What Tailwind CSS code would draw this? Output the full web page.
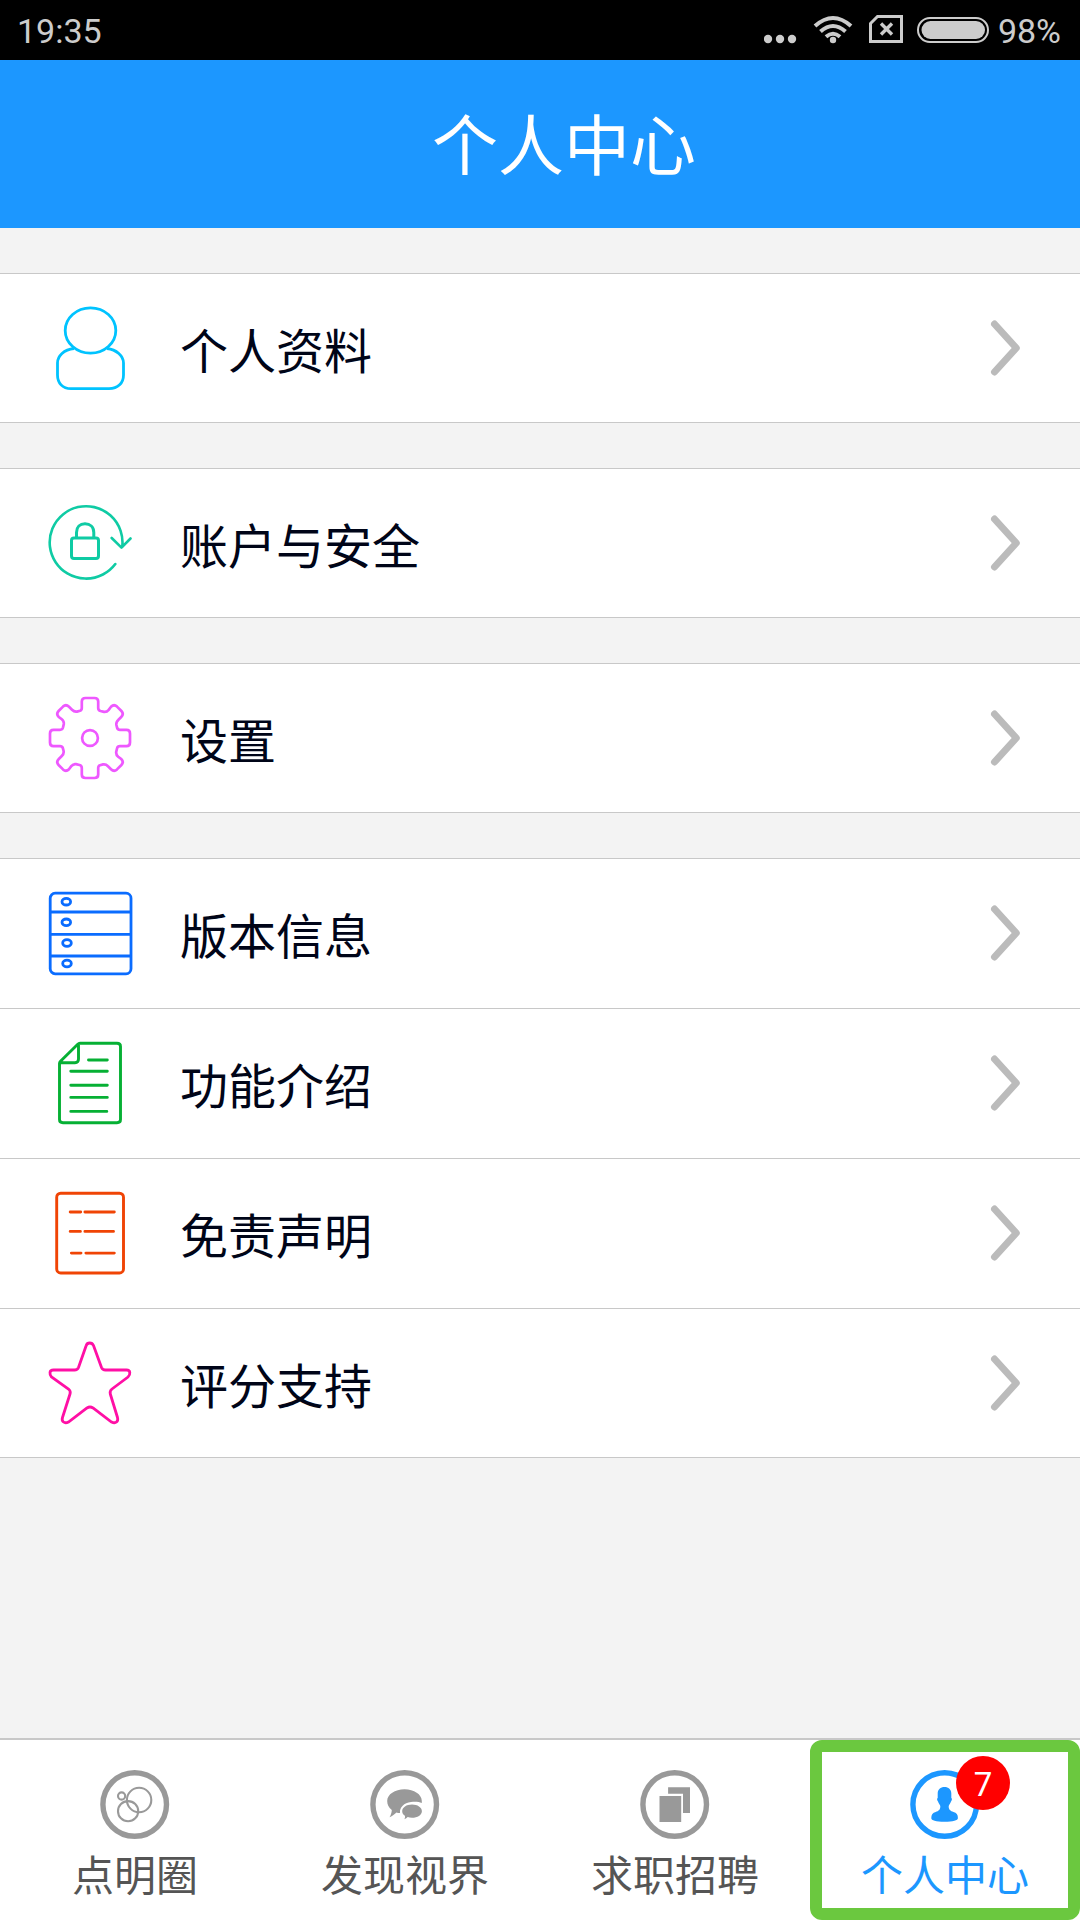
<!DOCTYPE html>
<html lang="zh-CN">

<head>
    <meta charset="UTF-8">
    <meta name="viewport" content="width=device-width, initial-scale=1.0">
    <title>个人中心</title>
    <script src="https://cdn.jsdelivr.net/npm/@tailwindcss/browser@4"></script>
</head>

<body class="flex flex-col w-[1080px] h-[1920px] overflow-hidden bg-[#f3f3f3] font-['Noto_Sans_CJK_SC',sans-serif]">
    <!-- #region Status bar -->
    <div class="flex items-center justify-between h-[60px] shrink-0 bg-black pl-[17px] pr-[19px] text-[#ccc] font-[Roboto,sans-serif] text-[34px] leading-[60px]">
        <span class="pt-px">19:35</span>
        <div class="flex items-center">
            <svg width="225" height="60" viewBox="764 0 225 60" fill="none" stroke="#ccc" stroke-width="3">
                <g fill="#ccc" stroke="none">
                    <circle cx="768" cy="39" r="4.2"></circle>
                    <circle cx="780" cy="39" r="4.2"></circle>
                    <circle cx="792" cy="39" r="4.2"></circle>
                    <circle cx="833" cy="40" r="3.2"></circle>
                </g>
                <path stroke-width="4" d="M815 26Q833 10 851 26M820.500 31.500Q833 20.500 845.500 31.500M826 36.800Q833 30.700 840 36.800"></path>
                <path d="M870.500 23.500L877.500 16.500H901.500V41.500H870.500Z"></path>
                <path stroke-width="3.4" d="M881 23.500L892 34.500M892 23.500L881 34.500"></path>
                <rect x="918" y="18" width="70" height="24" rx="12" stroke-width="2"></rect>
                <rect x="921.500" y="21" width="63.500" height="18" rx="9" fill="#ccc" stroke="none"></rect>
            </svg>
            <span class="pl-[9px] pt-px">98%</span>
        </div>
    </div>
    <!-- #endregion Status bar -->

    <!-- #region Header -->
    <header class="flex items-center justify-center h-[168px] shrink-0 bg-[#1c97ff] pl-12 pb-1.5 text-white">
        <h1 class="text-[66px] leading-[96px]">个人中心</h1>
    </header>
    <!-- #endregion Header -->

    <!-- #region Menu -->
    <main class="flex flex-col gap-[45px] pt-[45px] flex-1 text-[48px] leading-[72px] text-[#000518]">
        <section class="bg-white border-y border-[#c8c8c8]">
            <a class="flex items-center h-[148px] pl-12 pr-[60px]">
                <svg class="overflow-visible" width="84" height="84" viewBox="0 0 84 84" fill="none" stroke="#00c3ff" stroke-width="2.800">
                    <ellipse cx="42.500" cy="24.500" rx="25.300" ry="22.700"></ellipse>
                    <path d="M26 42.500C16 43.500 9.500 50 9.500 57V69C9.500 77 14.500 82.700 23 82.700H61C70 82.700 75.500 77 75.500 69V57C75.500 50 68.500 43.500 59 42.500"></path>
                </svg>
                <span class="pl-12 flex-1">个人资料</span>
                <svg width="30" height="56" viewBox="0 0 30 56" fill="none" stroke="#bbb" stroke-width="7" stroke-linecap="round" stroke-linejoin="round"><path d="M4.500 4L26.300 28L4.500 52"></path></svg>
            </a>
        </section>

        <section class="bg-white border-y border-[#c8c8c8]">
            <a class="flex items-center h-[148px] pl-12 pr-[60px]">
                <svg class="overflow-visible" width="84" height="84" viewBox="0 0 84 84" fill="none" stroke="#0fcba4" stroke-width="2.600" stroke-linecap="round" stroke-linejoin="round">
                    <path d="M67.300 63A36.400 36.200 0 1 1 74.200 46M63.700 37L73.500 46.700L82.500 37.500"></path>
                    <g stroke-width="3">
                        <rect x="23.500" y="37" width="27" height="20.500" rx="2.500"></rect>
                        <path d="M28.500 36V31.500C28.500 26 32 22.700 37 22.700S45.800 26 45.800 31.500V36"></path>
                    </g>
                </svg>
                <span class="pl-12 flex-1">账户与安全</span>
                <svg width="30" height="56" viewBox="0 0 30 56" fill="none" stroke="#bbb" stroke-width="7" stroke-linecap="round" stroke-linejoin="round"><path d="M4.500 4L26.300 28L4.500 52"></path></svg>
            </a>
        </section>

        <section class="bg-white border-y border-[#c8c8c8]">
            <a class="flex items-center h-[148px] pl-12 pr-[60px]">
                <svg class="overflow-visible" width="84" height="84" viewBox="-42 -42 84 84" fill="none" stroke="#ee58ff" stroke-width="2.700">
                    <path id="gear-quarter" d="M0 -40H4.500Q8.200 -40 8.200 -36.500V-30Q8.200 -27.600 10.500 -27L14 -26.200Q16.800 -25.900 18.700 -28.200L21 -31.200Q24 -34.200 27 -31.400L31.400 -27Q34.200 -24 31.200 -21L28.200 -18Q25.900 -15.800 26.400 -13L27.200 -10Q27.800 -8.200 30 -8.200H36.500Q40 -8.200 40 -4.500V0"></path>
                    <use href="#gear-quarter" transform="rotate(90)"></use>
                    <use href="#gear-quarter" transform="rotate(180)"></use>
                    <use href="#gear-quarter" transform="rotate(270)"></use>
                    <circle cx="0" cy="0" r="7.900"></circle>
                </svg>
                <span class="pl-12 flex-1">设置</span>
                <svg width="30" height="56" viewBox="0 0 30 56" fill="none" stroke="#bbb" stroke-width="7" stroke-linecap="round" stroke-linejoin="round"><path d="M4.500 4L26.300 28L4.500 52"></path></svg>
            </a>
        </section>

        <section class="bg-white border-y border-[#c8c8c8] divide-y divide-[#c8c8c8]">
            <a class="flex items-center h-[150px] pl-12 pr-[60px] pb-px">
                <svg class="overflow-visible" width="84" height="84" viewBox="0 0 84 84" fill="none" stroke="#0a6cff" stroke-width="2.800">
                    <rect x="2.200" y="2.200" width="80.800" height="80.600" rx="5"></rect>
                    <path d="M2 21H83M2 43.300H83M2 65H83"></path>
                    <ellipse cx="18.300" cy="10.700" rx="4.300" ry="3.300"></ellipse>
                    <ellipse cx="18.300" cy="31.300" rx="4.300" ry="3.300"></ellipse>
                    <ellipse cx="19" cy="52" rx="4.300" ry="3.300"></ellipse>
                    <ellipse cx="19" cy="72.500" rx="4.300" ry="3.300"></ellipse>
                </svg>
                <span class="pl-12 flex-1">版本信息</span>
                <svg width="30" height="56" viewBox="0 0 30 56" fill="none" stroke="#bbb" stroke-width="7" stroke-linecap="round" stroke-linejoin="round"><path d="M4.500 4L26.300 28L4.500 52"></path></svg>
            </a>
            <a class="flex items-center h-[150px] pl-12 pr-[60px] pb-px">
                <svg class="overflow-visible" width="84" height="84" viewBox="0 0 84 84" fill="none" stroke="#06b034" stroke-width="2.900" stroke-linecap="round" stroke-linejoin="round">
                    <path d="M11.500 22.500Q11.500 21.300 12.500 20.300L29.500 3.500Q30.700 2.300 32 2.300H69Q72.500 2.300 72.500 5.500V78.500Q72.500 81.700 69 81.700H15Q11.500 81.700 11.500 78.500ZM30.500 3V18Q30.500 21.700 27 21.700H12"></path>
                    <path d="M42 19H60.800M24.300 30.300H60.800M24.300 44.300H60.800M24.300 56.400H60.800M24.300 70.400H60.300" transform="translate(-1.500 0)"></path>
                </svg>
                <span class="pl-12 flex-1">功能介绍</span>
                <svg width="30" height="56" viewBox="0 0 30 56" fill="none" stroke="#bbb" stroke-width="7" stroke-linecap="round" stroke-linejoin="round"><path d="M4.500 4L26.300 28L4.500 52"></path></svg>
            </a>
            <a class="flex items-center h-[150px] pl-12 pr-[60px] pb-px">
                <svg class="overflow-visible" width="84" height="84" viewBox="0 0 84 84" fill="none" stroke="#f04405" stroke-width="2.900" stroke-linecap="round">
                    <rect x="8.700" y="2.200" width="66.800" height="79.800" rx="4"></rect>
                    <path d="M22.200 21H32.700M36.900 21H66.300M22.200 40.400H32.400M36.900 40.400H65.500M23.400 62.100H33M37.900 62.100H66.300"></path>
                </svg>
                <span class="pl-12 flex-1">免责声明</span>
                <svg width="30" height="56" viewBox="0 0 30 56" fill="none" stroke="#bbb" stroke-width="7" stroke-linecap="round" stroke-linejoin="round"><path d="M4.500 4L26.300 28L4.500 52"></path></svg>
            </a>
            <a class="flex items-center h-[148px] pl-12 pr-[60px]">
                <svg class="overflow-visible" width="84" height="84" viewBox="0 0 84 84" fill="none" stroke="#ff0fa5" stroke-width="2.800">
                    <path d="M38.200 4.500Q39 2 41.700 2T45.500 4.500L53.500 26.500Q54.500 29 57.500 29H78.500Q81.500 29 81.800 31.500T80 36L64 48Q61.500 50 62.300 53L69.500 76.500Q70.300 79.500 68.500 81T63.500 81L45 67Q42 65 39 67L20.500 81Q17.500 82.500 15.500 81T14.500 76.500L22 53Q23 50 20.500 48L3.500 36Q1.700 34 2 31.500T5.500 29H26.500Q29.500 29 30.500 26.500Z"></path>
                </svg>
                <span class="pl-12 flex-1">评分支持</span>
                <svg width="30" height="56" viewBox="0 0 30 56" fill="none" stroke="#bbb" stroke-width="7" stroke-linecap="round" stroke-linejoin="round"><path d="M4.500 4L26.300 28L4.500 52"></path></svg>
            </a>
        </section>
    </main>
    <!-- #endregion Menu -->

    <!-- #region Tab bar -->
    <nav class="grid grid-cols-4 h-[182px] shrink-0 bg-white border-t-2 border-[#c8c8c8] text-[42px] leading-[60px] text-[#555]">
        <a class="flex flex-col items-center pt-[30px]">
            <svg width="70" height="70" viewBox="0 0 70 70" fill="none" stroke="#999">
                <circle cx="34.700" cy="34.500" r="31.800" stroke-width="5.400"></circle>
                <g stroke-width="2.100">
                    <circle cx="21.600" cy="26" r="3.600"></circle>
                    <circle cx="39.100" cy="30" r="12.200"></circle>
                    <circle cx="28.100" cy="41.200" r="10.100"></circle>
                </g>
            </svg>
            <span class="pt-[3px]">点明圈</span>
        </a>
        <a class="flex flex-col items-center pt-[30px]">
            <svg width="70" height="70" viewBox="0 0 70 70" fill="#999">
                <circle cx="34.700" cy="34.500" r="31.800" fill="none" stroke="#999" stroke-width="5.400"></circle>
                <path d="M34.500 19.200C44 19.200 51.800 24.300 51.800 31V33C49 31.700 45 31.600 41 32C34 33 29.500 37 30 43C28.500 43 27.500 42.700 26.500 42.400C24.500 44.200 22.500 45.800 19.500 47.300C20.800 45 21.700 42.500 21.800 39.900C18.500 37.500 17.200 34.500 17.200 31C17.200 24.300 25 19.200 34.500 19.200Z"></path>
                <path d="M42 34.500C47.500 34.500 51.900 37.400 51.900 41.200S47.500 47.700 42 47.700C40.300 47.700 39 47.500 37.700 47.100C36.800 48 35.800 48.700 34.400 49.200C35 48.200 35.200 47 34.900 45.800C33 44.500 32.200 42.900 32.200 41.200C32.200 37.400 36.500 34.500 42 34.500Z"></path>
            </svg>
            <span class="pt-[3px]">发现视界</span>
        </a>
        <a class="flex flex-col items-center pt-[30px]">
            <svg width="70" height="70" viewBox="0 0 70 70" fill="#999">
                <circle cx="34.700" cy="34.500" r="31.800" fill="none" stroke="#999" stroke-width="5.400"></circle>
                <path d="M19.500 26H41.200V52H19.500ZM28.100 17.200H50V43H43V23.700H28.100Z"></path>
            </svg>
            <span class="pt-[3px]">求职招聘</span>
        </a>
        <a class="flex flex-col items-center pt-[18px] border-12 border-[#6bc83f] rounded-xl text-[#1c97ff]">
            <div class="relative">
                <svg width="70" height="70" viewBox="0 0 70 70" fill="#1c97ff">
                    <circle cx="34.700" cy="34.500" r="31.800" fill="none" stroke="#1c97ff" stroke-width="5.400"></circle>
                    <path d="M34.500 17C38.500 17 41.300 19.500 41.300 23.500V28C42.300 28.300 42 30.500 41 31.500C40.500 33.500 39 34.500 38.700 36C38.500 39.500 40.500 41 43.500 42C46.500 43 48 44.500 47.900 48C47.900 50.500 43 51.700 34.500 51.700S21.300 50.500 21.300 48C21.300 44.500 22.700 43 25.700 42C28.700 41 30.500 39.500 30.300 36C30 34.500 28.500 33.500 28 31.500C27 30.500 26.700 28.300 27.700 28V23.500C27.700 19.500 30.500 17 34.500 17Z"></path>
                </svg>
                <span class="absolute left-[46px] -top-3.5 size-[54px] rounded-full bg-[#f00] text-white text-center text-[33px] leading-[58px] font-[Roboto,sans-serif]">7</span>
            </div>
            <span class="pt-[3px]">个人中心</span>
        </a>
    </nav>
    <!-- #endregion Tab bar -->
</body>

</html>
